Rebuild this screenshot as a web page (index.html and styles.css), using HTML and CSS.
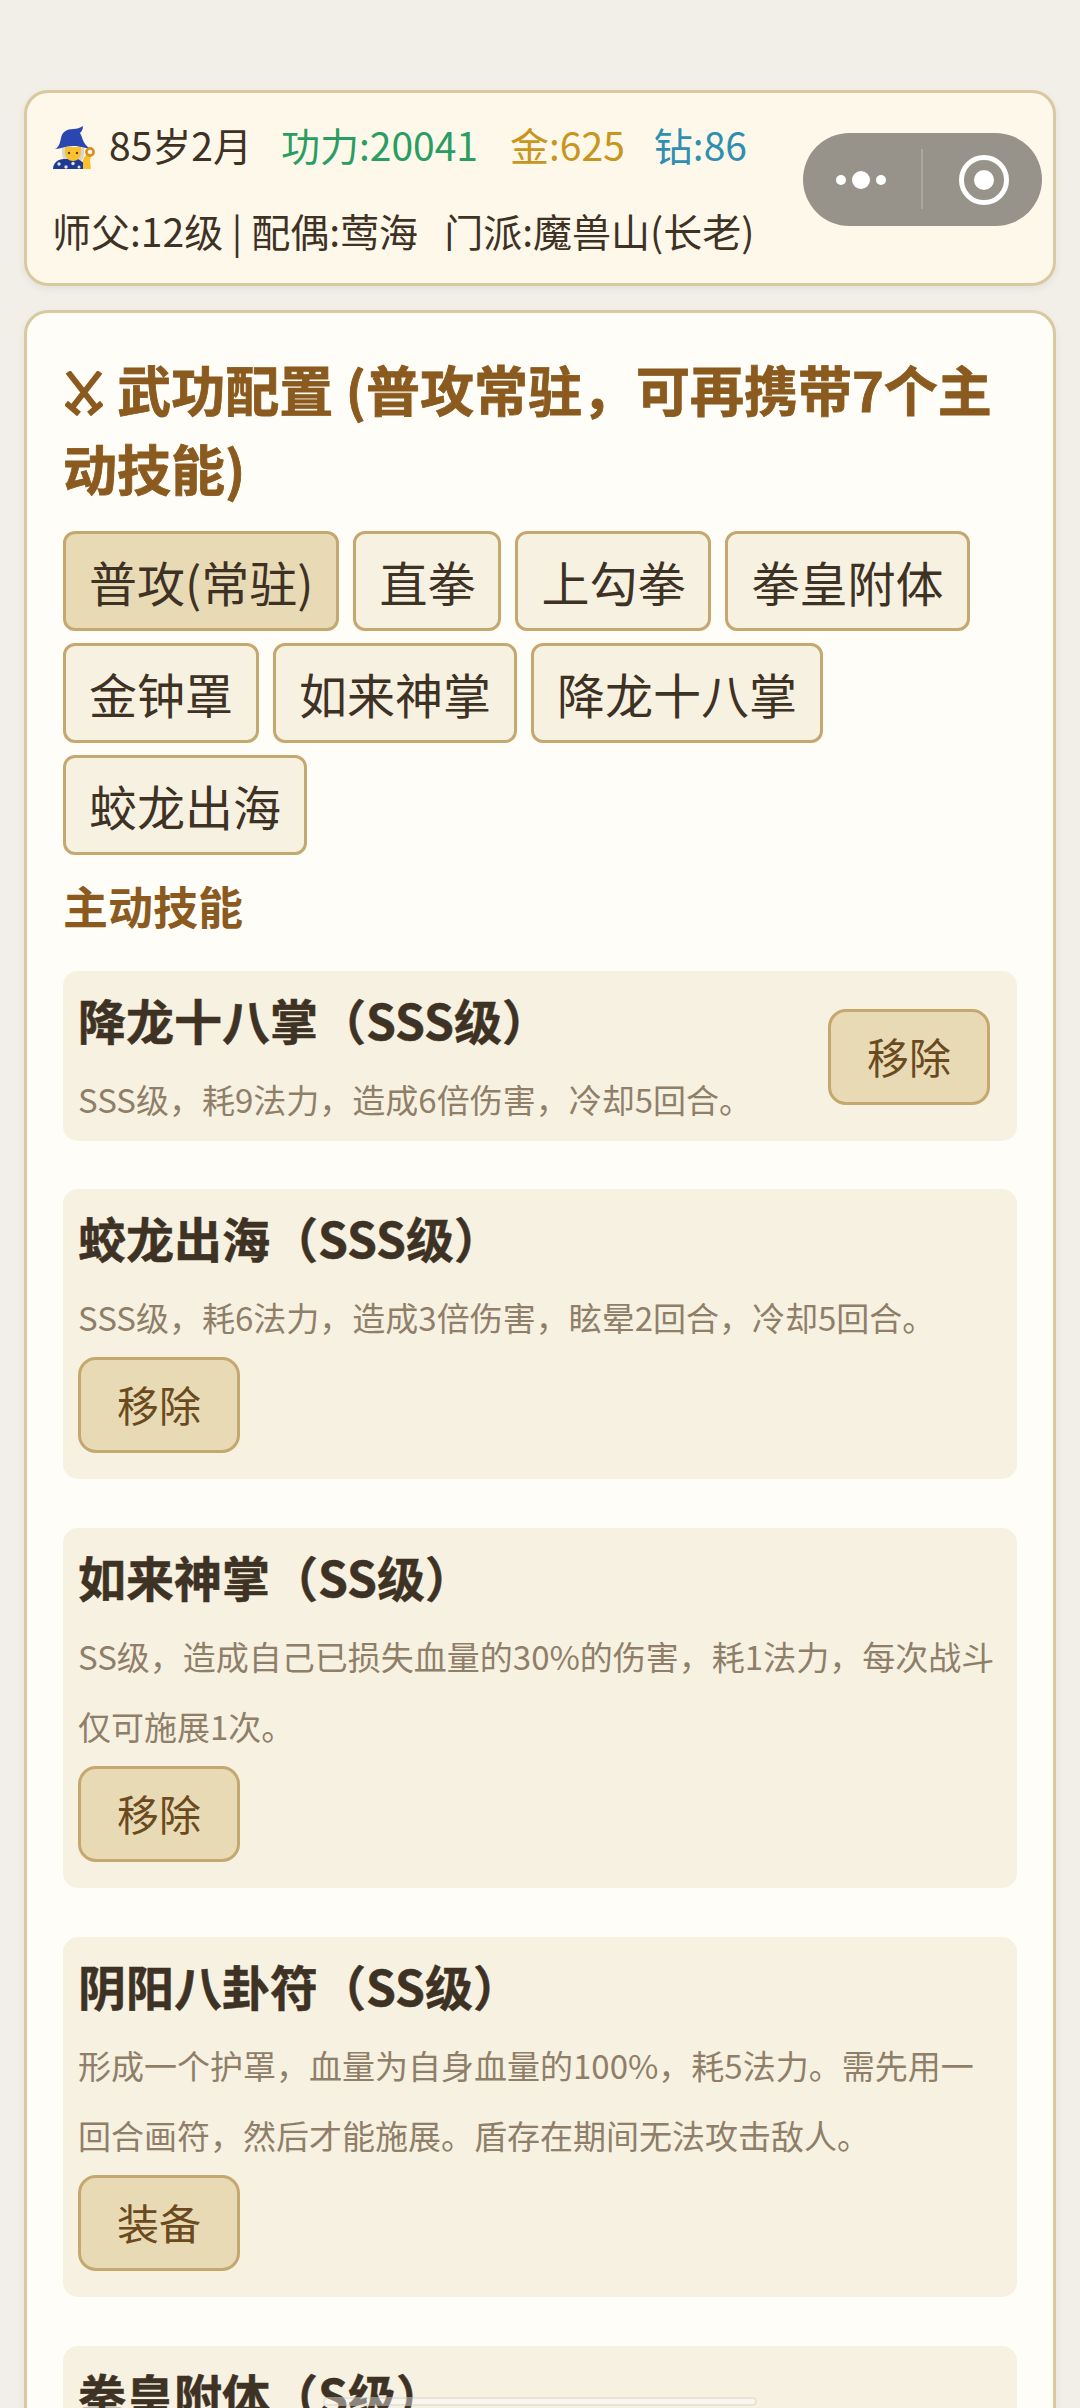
FILE: index.html
```html
<!DOCTYPE html>
<html lang="zh">
	<head>
		<title>武功配置</title>
		<meta charset="utf-8">
		<link rel="stylesheet" href="styles.css">
	</head>

	<body>
		<div class="page">
			<div class="statusCard">
				<div class="statusRow">
					<svg class="mage" viewBox="0 0 42 43">
						<path fill="#d8d6cf" d="M9 22c0 6 0 11 3 13h16c3-2 3-7 3-13z"/>
						<path fill="#1f3a93" d="M0 43c0-6 5-10 11-10h14l6 4v6z"/>
						<path fill="#fbc02d" d="M12 21h16v5c0 6-4 9-8 9s-8-3-8-9z"/>
						<path fill="#2b46b0" d="M2 23c4-2 5-6 6-11 1-6 6-9 12-9 4 0 7-1 10-3 0 4-2 6-3 7 3 5 3 12 10 15-5 1-9-2-17-2S8 23 2 23z"/>
						<circle cx="16" cy="27" r="1.2" fill="#5d4037"/>
						<circle cx="24" cy="27" r="1.2" fill="#5d4037"/>
						<circle cx="6" cy="38" r="1.7" fill="#dfe5ea"/>
						<circle cx="13" cy="41" r="1.7" fill="#dfe5ea"/>
						<circle cx="20" cy="37.5" r="1.7" fill="#dfe5ea"/>
						<circle cx="26" cy="41" r="1.5" fill="#dfe5ea"/>
						<path fill="#fbc02d" d="M30 43v-8c0-2 1-4 2-5l4-3 2 3-1 5 1 8z"/>
						<circle cx="37" cy="26" r="3.6" fill="none" stroke="#d98e1f" stroke-width="2.6"/>
					</svg>
					<span class="age">85岁2月</span>
					<span class="power">功力:20041</span>
					<span class="gold">金:625</span>
					<span class="gem">钻:86</span>
				</div>
				<div class="infoRow">师父:12级 | 配偶:莺海 &nbsp; 门派:魔兽山(长老)</div>
			</div>

			<div class="capsule">
				<svg class="capsuleDots" viewBox="0 0 52 20">
					<circle cx="5" cy="10" r="5" fill="#fff"/>
					<circle cx="25" cy="10" r="9" fill="#fff"/>
					<circle cx="45" cy="10" r="5" fill="#fff"/>
				</svg>
				<div class="capsuleLine"></div>
				<svg class="capsuleTarget" viewBox="0 0 50 50">
					<circle cx="25" cy="25" r="22.5" fill="none" stroke="#fff" stroke-width="5"/>
					<circle cx="25" cy="25" r="10" fill="#fff"/>
				</svg>
			</div>

			<div class="mainCard">
				<h2 class="cardTitle"><svg class="swords" viewBox="0 0 38 45">
						<path fill="none" stroke="#8b5a1f" stroke-width="6" d="M3 1l29 37M35 1L6 38M1 32l13 11M37 32L24 43"/>
					</svg> 武功配置 (普攻常驻，可再携带7个主动技能)</h2>

				<div class="skillTabs">
					<button class="tab tabOn">普攻(常驻)</button>
					<button class="tab">直拳</button>
					<button class="tab">上勾拳</button>
					<button class="tab">拳皇附体</button>
					<button class="tab">金钟罩</button>
					<button class="tab">如来神掌</button>
					<button class="tab">降龙十八掌</button>
					<button class="tab">蛟龙出海</button>
				</div>

				<h3 class="sectionTitle">主动技能</h3>

				<div class="skill skillInline">
					<div class="skillText">
						<div class="skillName">降龙十八掌（SSS级）</div>
						<div class="skillDesc">SSS级，耗9法力，造成6倍伤害，冷却5回合。</div>
					</div>
					<button class="actionBtn">移除</button>
				</div>

				<div class="skill">
					<div class="skillName">蛟龙出海（SSS级）</div>
					<div class="skillDesc">SSS级，耗6法力，造成3倍伤害，眩晕2回合，冷却5回合。</div>
					<button class="actionBtn">移除</button>
				</div>

				<div class="skill">
					<div class="skillName">如来神掌（SS级）</div>
					<div class="skillDesc">SS级，造成自己已损失血量的30%的伤害，耗1法力，每次战斗仅可施展1次。</div>
					<button class="actionBtn">移除</button>
				</div>

				<div class="skill">
					<div class="skillName">阴阳八卦符（SS级）</div>
					<div class="skillDesc">形成一个护罩，血量为自身血量的100%，耗5法力。需先用一回合画符，然后才能施展。盾存在期间无法攻击敌人。</div>
					<button class="actionBtn">装备</button>
				</div>

				<div class="skill">
					<div class="skillName">拳皇附体（S级）</div>
				</div>
			</div>
		</div>
		<div class="scrollHint"></div>
	</body>
</html>
```

FILE: styles.css
```css
html, body {
	margin: 0;
	height: 100%;
	overflow: hidden;
}

body {
	background-color: #f2efe9;
	color: #3e3225;
	font-family: "Noto Sans CJK SC", "Noto Sans", sans-serif;
}

.page {
	position: relative;
	padding: 90px 24px 0;
}

.statusCard {
	background-color: #fef8ea;
	border: 3px solid #d9c9a0;
	border-radius: 24px;
	box-shadow: 0 3px 9px rgba(0,0,0,0.06);
	padding: 8px 25px 0;
	height: 196px;
	box-sizing: border-box;
	margin-bottom: 24px;
}

.statusRow {
	display: flex;
	align-items: center;
	height: 86px;
	font-size: 39px;
	white-space: nowrap;
}

.mage {
	width: 42px;
	height: 43px;
	margin: 6px 14px 0 1px;
}

.age { margin-right: 29px; }
.power { color: #2a9d62; margin-right: 32px; }
.gold { color: #c8961e; margin-right: 29px; }
.gem { color: #2e8fb0; }

.infoRow {
	font-size: 39px;
	line-height: 86px;
	white-space: nowrap;
}

.capsule {
	position: absolute;
	top: 133px;
	left: 803px;
	width: 239px;
	height: 93px;
	border-radius: 47px;
	background-color: #98938a;
}

.capsuleDots {
	position: absolute;
	left: 33px;
	top: 37px;
	width: 52px;
	height: 20px;
}

.capsuleLine {
	position: absolute;
	left: 118px;
	top: 16px;
	width: 2px;
	height: 60px;
	background-color: #aca79f;
}

.capsuleTarget {
	position: absolute;
	left: 156px;
	top: 22px;
	width: 50px;
	height: 50px;
}

.mainCard {
	background-color: #fffdf8;
	border: 3px solid #d9c9a0;
	border-radius: 24px;
	box-shadow: 0 3px 9px rgba(0,0,0,0.06);
	padding: 0 36px;
	height: 2200px;
	box-sizing: border-box;
}

.cardTitle {
	margin: 0 0 24px;
	padding-top: 36px;
	font-size: 54px;
	line-height: 79px;
	font-weight: 700;
	color: #8b5a1f;
	-webkit-text-stroke: 0.8px #8b5a1f;
}

.swords {
	width: 38px;
	height: 45px;
	margin: 0 2px -4px 2px;
}

.skillTabs {
	display: flex;
	flex-wrap: wrap;
	gap: 12px 14px;
}

.tab {
	font-family: inherit;
	font-size: 48px;
	color: #3e3225;
	background-color: #f7f1e1;
	border: 3px solid #c4a870;
	border-radius: 12px;
	height: 100px;
	padding: 0 23px;
}

.tabOn {
	background-color: #e8dab5;
}

.sectionTitle {
	margin: 21px 0 35px;
	font-size: 45px;
	line-height: 60px;
	font-weight: 700;
	color: #8b5a1f;
}

.skill {
	background-color: #f7f1e1;
	border-radius: 15px;
	padding: 9px 15px 26px;
	margin-bottom: 49px;
}

.skillInline {
	display: flex;
	align-items: center;
	justify-content: space-between;
	padding: 9px 27px 7px 15px;
	margin-bottom: 48px;
}

.skillName {
	font-size: 48px;
	line-height: 78px;
	font-weight: 700;
	margin-bottom: 6px;
	-webkit-text-stroke: 0.5px #3e3225;
}

.skillDesc {
	font-size: 33px;
	line-height: 70px;
	color: #8f7f69;
}

.actionBtn {
	display: block;
	font-family: inherit;
	font-size: 42px;
	color: #6b4a1e;
	background-color: #e8dab5;
	border: 3px solid #c4a870;
	border-radius: 18px;
	width: 162px;
	height: 96px;
	padding: 0 0 4px;
	margin-top: 5px;
}

.skillInline .actionBtn {
	margin-top: 0;
}

.scrollHint {
	position: fixed;
	left: 323px;
	top: 2397px;
	width: 434px;
	height: 9px;
	box-sizing: border-box;
	background-color: rgba(255,255,255,0.4);
	border: 2px solid rgba(140,140,120,0.18);
	border-radius: 5px;
}
```
